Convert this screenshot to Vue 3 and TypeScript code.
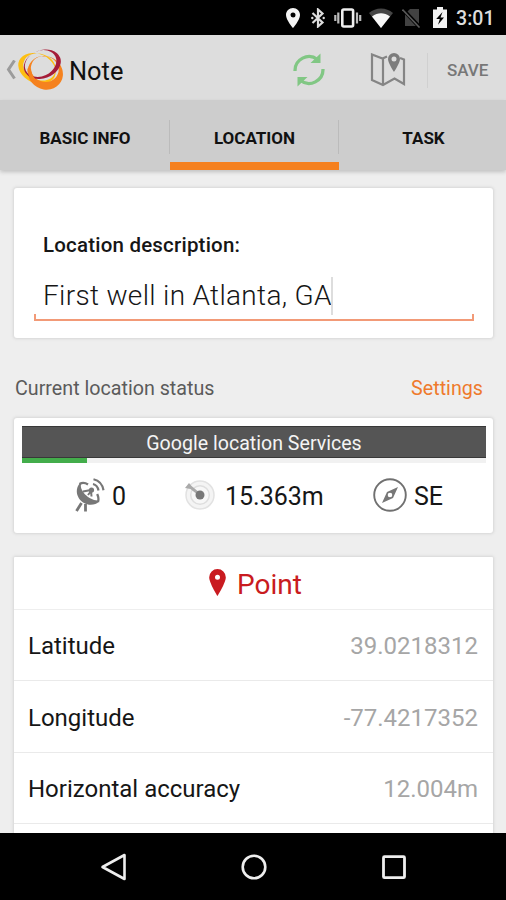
<script setup lang="ts">
import { ref } from 'vue'

interface Reading {
  label: string
  value: string
  key: string
}

const tabs: string[] = ['BASIC INFO', 'LOCATION', 'TASK']
const activeTab = ref(1)
const description = ref('First well in Atlanta, GA')

const readings: Reading[] = [
  { key: 'lat', label: 'Latitude', value: '39.0218312' },
  { key: 'lon', label: 'Longitude', value: '-77.4217352' },
  { key: 'acc', label: 'Horizontal accuracy', value: '12.004m' },
]
</script>

<template>
  <div class="screen">
    <div class="status">
      <svg class="s-pin" viewBox="0 0 14 20"><path fill="#f4f4f4" fill-rule="evenodd" d="M7 0C3.1 0 0 3.1 0 7c0 5 7 13 7 13s7-8 7-13c0-3.900-3.100-7-7-7zm0 4.500a2.500 2.500 0 1 1 0 5a2.500 2.500 0 0 1 0-5z" /></svg>
      <svg class="s-bt" viewBox="0 0 14 20"><path d="M1.500 5l10 9.500L7 18.500V1.500l4.500 4L1.500 15" fill="none" stroke="#ddd" stroke-width="2.200" /><circle cx="1.300" cy="10" r="1.200" fill="#ddd" /><circle cx="12.700" cy="10" r="1.200" fill="#ddd" /></svg>
      <svg class="s-vib" viewBox="0 0 28 20"><rect x="8.300" y="1.500" width="10.800" height="17" rx="1.500" fill="none" stroke="#eee" stroke-width="2.600" /><path d="M4.300 4.500v11M1.300 7v6M23 4.500v11M26.200 7v6" stroke="#bbb" stroke-width="2.200" /></svg>
      <svg class="s-wifi" viewBox="0 0 24 20"><path d="M12 20L0 5C3.500 2 7.500.5 12 .5S20.500 2 24 5z" fill="#454545" /><path d="M12 20L3 8.500C9 4.300 15 4.300 21 8.500z" fill="#f8f8f8" /></svg>
      <svg class="s-sim" viewBox="0 0 19 20"><path d="M8 1h9v17H3V6z" fill="#424242" /><path d="M1 1.500l17 18" stroke="#000" stroke-width="4" /><path d="M.5 1.500l17 18" stroke="#5a5a5a" stroke-width="1.600" /></svg>
      <svg class="s-bat" viewBox="0 0 14 21"><path d="M0 2.500h4V0h6v2.500h4V21H0z" fill="#f2f2f2" /><path d="M9.500 5L3.200 12h3.600L5 17.700 11 10.500H7.500z" fill="#000" /></svg>
      <span class="clock">3:01</span>
    </div>

    <header class="bar">
      <svg class="back" viewBox="0 0 10 20"><path d="M8.500 .5L2.500 9.500l6 9" fill="none" stroke="#9b9b9b" stroke-width="3" /></svg>
      <svg class="logo" viewBox="0 0 46 42">
        <path fill="#fdbf12" fill-rule="evenodd" d="M2.300 11.300a19.500 14.500 25 1 0 35.400 16.400a19.500 14.500 25 1 0-35.400-16.400zM7 12.400a16.500 12.500 20 1 0 31 11.200a16.500 12.500 20 1 0-31-11.200z" />
        <path fill="#f5821f" fill-rule="evenodd" d="M12.700 14.800a18 16.500 30 1 0 31.200 18a18 16.500 30 1 0-31.200-18zM14.600 15.200a14 12.600 20 1 0 26.300 9.600a14 12.600 20 1 0-26.300-9.600z" />
        <path fill="#a51c38" fill-rule="evenodd" d="M7.400 21.700a19 14 -20 1 0 35.800-13a19 14 -20 1 0-35.800 13zM8.800 21.400a16.300 12.600 -25 1 0 29.600-13.800a16.300 12.600 -25 1 0-29.600 13.800z" />
        <path d="M12.200 19.500c0 4 1.500 8 4.500 11.500" fill="none" stroke="#f5821f" stroke-width="3.600" />
      </svg>
      <h1 class="title">Note</h1>
      <svg class="sync" viewBox="0 0 32 34">
        <path d="M2 18A14 14 0 0 1 24.500 6.500M30 16A14 14 0 0 1 7.500 27.500" fill="none" stroke="#81c784" stroke-width="3.300" />
        <path d="M27.500 .5v9.500H17.500zM4.500 33.500V24H14.500z" fill="#81c784" />
      </svg>
      <svg class="map" viewBox="0 0 36 34">
        <path d="M17 3.500L12.500 5.500 2 1.500v25.500l11 5 11.500-6.500 9.500 5.500V6.500l-4-1.500M13 5.500V31" fill="none" stroke="#858585" stroke-width="2.200" />
        <path fill="#7c7c7c" fill-rule="evenodd" d="M24 0a6 6 0 0 0-6 6c0 4 6 13 6 13s6-9 6-13a6 6 0 0 0-6-6zm0 3.500a2.500 2.500 0 1 1 0 5a2.500 2.500 0 0 1 0-5z" />
      </svg>
      <button class="save" type="button">SAVE</button>
    </header>

    <nav class="tabs">
      <button
        v-for="(tab, i) in tabs"
        :key="tab"
        type="button"
        class="tab"
        :class="{ active: i === activeTab }"
        @click="activeTab = i"
      ><span>{{ tab }}</span></button>
    </nav>

    <main class="content">
      <section class="card describe">
        <p class="label">Location description:</p>
        <div class="field"><span class="entry">{{ description }}</span><i class="caret"></i></div>
      </section>

      <div class="heading">
        <span class="heading-text">Current location status</span>
        <a class="settings">Settings</a>
      </div>

      <section class="card provider">
        <div class="provider-name"><span>Google location Services</span></div>
        <div class="track"><div class="fill"></div></div>
        <div class="metrics">
          <svg class="dish" viewBox="0 0 30 34">
            <path d="M5 5C-1 12 2 21 9 25C14 28 21 27 24 23.500z" fill="#777" />
            <path d="M6 6.500C4.500 12 13 22 22.500 22.500C24 18 21 14 19 12L12 6.500C9.500 5.500 7.500 5.500 6 6.500z" fill="#fff" />
            <path d="M4.500 6C7 4.500 10 4.500 13 6.500M23 24c1-2.500.5-5-.8-8" fill="none" stroke="#777" stroke-width="2.300" />
            <path d="M8 13.500l8-1.500.5 6.500M16.500 12.500L13 17" fill="none" stroke="#777" stroke-width="2" /><circle cx="16.500" cy="12" r="2.600" fill="#777" />
            <path d="M6.500 25L1.500 33M10.500 26v7.500" fill="none" stroke="#777" stroke-width="2.800" />
            <path d="M18 6q4.500 1 5.500 6.500M18.500 1.300q8.500 2 10 11" fill="none" stroke="#777" stroke-width="2.200" />
          </svg>
          <span class="m-sats">0</span>
          <svg class="radar" viewBox="0 0 30 30">
            <circle cx="15" cy="15" r="14" fill="#f4f4f4" stroke="#e2e2e2" stroke-width="1.500" />
            <circle cx="15" cy="15" r="9.300" fill="#f7f7f7" stroke="#dedede" stroke-width="1.500" />
            <path d="M0 8L4 3l2.500 3L15 13l-1.500 2.500L5.500 9z" fill="#aaa" />
            <circle cx="15" cy="15" r="4.500" fill="#777" />
          </svg>
          <span class="m-acc">15.363m</span>
          <svg class="compass" viewBox="0 0 34 34">
            <circle cx="17" cy="17" r="15.800" fill="none" stroke="#707070" stroke-width="1.900" />
            <path fill="#777" fill-rule="evenodd" d="M25 9L20 20 9 25l5-11zm-8 5.700a2.300 2.300 0 1 0 0 4.600a2.300 2.300 0 0 0 0-4.600z" />
          </svg>
          <span class="m-dir">SE</span>
        </div>
      </section>

      <section class="card point">
        <div class="point-head">
          <svg class="p-pin" viewBox="0 0 17 27"><path fill="#c91b20" fill-rule="evenodd" d="M8.500 0A8.300 8.300 0 0 0 .2 8.300C.2 14 8.500 27 8.500 27s8.300-13 8.300-18.700A8.300 8.300 0 0 0 8.500 0zm0 5.700a2.500 2.500 0 1 1 0 5a2.500 2.500 0 0 1 0-5z" /></svg>
          <span class="p-title">Point</span>
        </div>
        <div v-for="r in readings" :key="r.key" class="row">
          <span class="name">{{ r.label }}</span>
          <span class="value">{{ r.value }}</span>
        </div>
      </section>
    </main>

    <footer class="navbar">
      <svg viewBox="0 0 28 28"><path d="M24.500 2v24L2.500 14z" fill="none" stroke="#eee" stroke-width="2.600" stroke-linejoin="round" /></svg>
      <svg viewBox="0 0 28 28"><circle cx="14" cy="14" r="11.300" fill="none" stroke="#eee" stroke-width="2.600" /></svg>
      <svg viewBox="0 0 28 28"><rect x="3.500" y="3.700" width="21" height="21" rx="1" fill="none" stroke="#eee" stroke-width="2.800" /></svg>
    </footer>
  </div>
</template>

<style>
body {
  margin: 0;
  background: #eee;
}
</style>

<style scoped>
.screen {
  width: 506px;
  height: 900px;
  overflow: hidden;
  display: flex;
  flex-direction: column;
  background: #eee;
  font-family: Roboto, 'Liberation Sans', sans-serif;
  color: #161616;
}
.screen * {
  box-sizing: border-box;
}
svg {
  display: block;
  flex: none;
}
span {
  white-space: nowrap;
}
button {
  font-family: inherit;
  border: 0;
  padding: 0;
  background: none;
}
.status {
  flex: none;
  height: 35px;
  background: #000;
  display: flex;
  align-items: center;
  padding-left: 286px;
}
.s-pin { width: 14px; height: 20px; }
.s-bt { width: 14px; height: 20px; margin-left: 11px; }
.s-vib { width: 28px; height: 20px; margin-left: 9px; }
.s-wifi { width: 24px; height: 20px; margin-left: 7px; }
.s-sim { width: 19px; height: 20px; margin-left: 9px; }
.s-bat { width: 14px; height: 21px; margin-left: 12px; }
.clock {
  margin-left: 9px;
  padding-top: 2px;
  font-size: 19.600px;
  line-height: 24px;
  font-weight: 500;
  color: #ddd;
}
.bar {
  flex: none;
  height: 65px;
  background: #ddd;
  display: flex;
  align-items: center;
  padding: 5px 0 0 6px;
}
.back { width: 10px; height: 20px; }
.logo { width: 46px; height: 42px; margin-left: 1px; }
.title {
  margin: 1px 0 0 6px;
  width: 224px;
  font-size: 25.400px;
  line-height: 30px;
  font-weight: 400;
  color: #111;
}
.sync { width: 32px; height: 34px; }
.map { width: 36px; height: 34px; margin-left: 45px; }
.save {
  margin-left: 21px;
  padding-left: 19px;
  height: 35px;
  border-left: 1px solid #d0d0d0;
  font-size: 17px;
  font-weight: 500;
  color: #777;
}
.tabs {
  flex: none;
  height: 70px;
  background: #cdcdcd;
  display: grid;
  grid-template-columns: 170px 169px 167px;
  box-shadow: 0 2px 4px #c0c0c0;
  position: relative;
}
.tab {
  display: flex;
  align-items: center;
  justify-content: center;
  padding-top: 13px;
  border-bottom: 8px solid transparent;
  font-size: 17px;
  font-weight: 700;
  color: #111;
  background: linear-gradient(#bbb, #bbb) right 20px / 1px 34px no-repeat;
}
.tab:last-child {
  padding-left: 2px;
  background: none;
}
.tab.active {
  border-bottom-color: #f5801e;
}
.content {
  flex: 1;
  min-height: 0;
  overflow: hidden;
  padding: 18px 13px 0 14px;
}
.card {
  background: #fff;
  border-radius: 3px;
  box-shadow: 0 0 3px 1px #d6d6d6;
}
.describe {
  height: 150px;
  padding: 44px 19px 0 20px;
}
.label {
  margin: 0 0 0 9px;
  font-size: 20.500px;
  line-height: 26px;
  font-weight: 500;
  letter-spacing: 0.200px;
}
.field {
  display: flex;
  align-items: center;
  margin-top: 3px;
  height: 60px;
  padding: 9px 0 0 9px;
  background:
    linear-gradient(#f29a77, #f29a77) left bottom / 100% 2px no-repeat,
    linear-gradient(#f29a77, #f29a77) left bottom / 2px 7px no-repeat,
    linear-gradient(#f29a77, #f29a77) right bottom / 2px 7px no-repeat;
}
.entry {
  font-size: 28px;
  font-weight: 300;
  letter-spacing: 0.320px;
}
.caret {
  width: 2px;
  height: 38px;
  margin-left: -1px;
  background: #ddd;
}
.heading {
  height: 80px;
  display: flex;
  align-items: center;
  justify-content: space-between;
  padding: 20px 10px 0 1px;
  font-size: 19.700px;
}
.heading-text { color: #5b5b5b; }
.settings { color: #ee7a2c; }
.provider {
  height: 115px;
  padding: 8px 7px 0 8px;
}
.provider-name {
  height: 32px;
  background: #555;
  border-top: 1px solid #383838;
  border-bottom: 1px solid #383838;
  display: flex;
  align-items: center;
  justify-content: center;
  padding-top: 2px;
  color: #f4f4f4;
  font-size: 19.600px;
}
.track {
  height: 5px;
  background: #f1f1f1;
}
.fill {
  width: 65px;
  height: 5px;
  background: #43ad4b;
}
.metrics {
  display: flex;
  align-items: center;
  height: 66px;
  padding-left: 53px;
  font-size: 25px;
}
.dish { width: 30px; height: 34px; margin-top: -2px; }
.m-sats { width: 80px; padding: 1px 0 0 7px; }
.radar { width: 30px; height: 30px; margin-top: -3px; }
.m-acc { width: 158px; padding: 1px 0 0 10px; }
.compass { width: 34px; height: 34px; margin-top: -2px; }
.m-dir { padding: 1px 0 0 7px; }
.point {
  margin-top: 24px;
  height: 400px;
  border-radius: 1px;
}
.point-head {
  height: 53px;
  display: flex;
  align-items: center;
  justify-content: center;
  padding-left: 4px;
  border-bottom: 1px solid #eee;
  color: #c91b20;
}
.p-pin { width: 17px; height: 27px; margin-top: -2px; }
.p-title {
  margin-left: 11px;
  padding-top: 2px;
  font-size: 28px;
}
.row {
  height: 71.400px;
  display: flex;
  align-items: center;
  justify-content: space-between;
  padding: 2px 15px 0 14px;
  border-bottom: 1px solid #eaeaea;
  font-size: 24px;
}
.value { color: #a6a6a6; }
.navbar {
  flex: none;
  height: 67px;
  background: #000;
  display: flex;
  justify-content: center;
  align-items: center;
  gap: 112px;
  padding-left: 1px;
}
.navbar svg {
  width: 28px;
  height: 28px;
}
</style>
